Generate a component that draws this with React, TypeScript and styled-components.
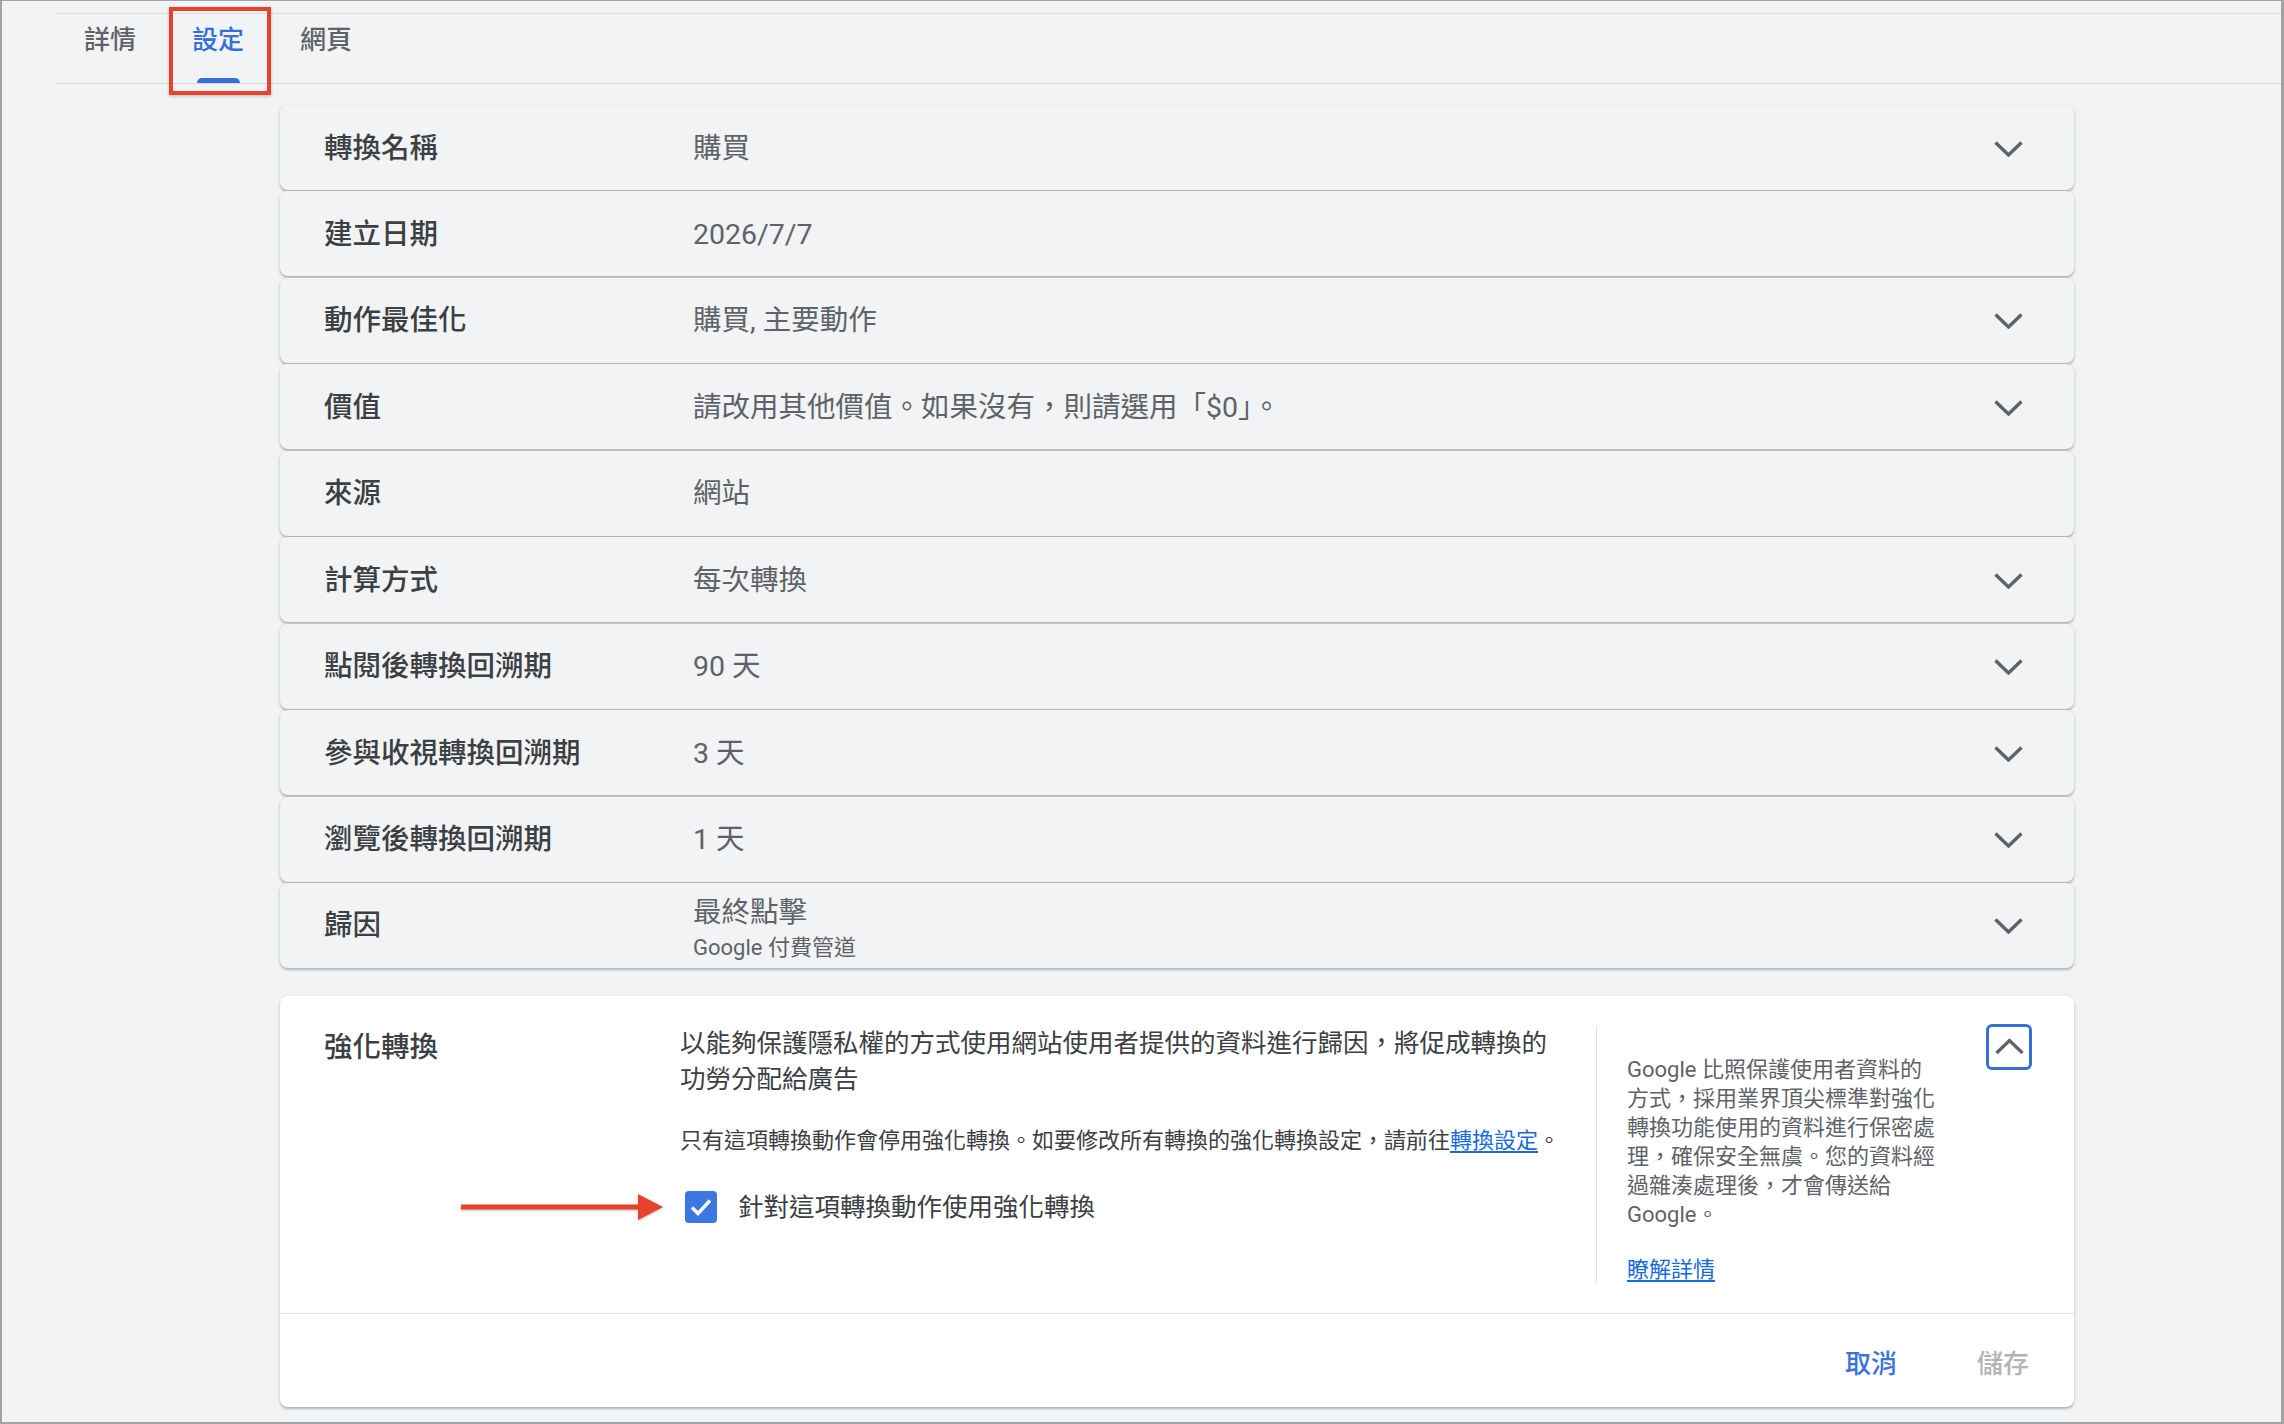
import React from "react";
import styled, { createGlobalStyle } from "styled-components";

const GlobalStyle = createGlobalStyle`
  html, body {
    margin: 0;
    padding: 0;
    background: #f1f3f4;
  }
  body {
    font-family: "Roboto", "Noto Sans CJK TC", "Noto Sans", sans-serif;
    -webkit-font-smoothing: antialiased;
  }
  * { box-sizing: border-box; }
`;

const Frame = styled.div`
  width: 2284px;
  height: 1424px;
  background: #f1f3f4;
  border-style: solid;
  border-color: #a2a2a4;
  border-width: 1px 3px 2px 2px;
  overflow: hidden;
`;

const TabBar = styled.div`
  margin: 12px 0 0 54px;
  height: 71px;
  border-top: 1px solid #dcdde0;
  border-bottom: 1px solid #d6d7da;
  display: flex;
`;

const Tab = styled.div<{ $active?: boolean }>`
  position: relative;
  height: 69px;
  padding: 8px 28px 0;
  display: flex;
  flex-direction: column;
  align-items: center;
  font-size: 26px;
  line-height: 36px;
  font-weight: 500;
  color: ${(p) => (p.$active ? "#3470d8" : "#5f6368")};
`;

const Indicator = styled.div`
  margin-top: auto;
  width: 43px;
  height: 5px;
  border-radius: 5px 5px 0 0;
  background: #3470d8;
`;

const Highlight = styled.div`
  position: absolute;
  left: 5px;
  top: -7px;
  width: 102px;
  height: 88px;
  border: 4px solid #e8412c;
  box-shadow: 0 1px 3px rgba(0, 0, 0, 0.25);
  pointer-events: none;
`;

const Panels = styled.div`
  margin: 21px 0 0 278px;
  width: 1794px;
  display: flex;
  flex-direction: column;
  gap: 1.44px;
`;

const RowCard = styled.div`
  height: 85px;
  display: grid;
  grid-template-columns: 369px 1fr 29px;
  align-items: center;
  padding: 2px 51px 0 44px;
  background: #f1f3f4;
  border-radius: 8px;
  box-shadow: 0 2px 2px rgba(60, 64, 67, 0.28), 0 1px 4px rgba(60, 64, 67, 0.12);
`;

const RowLabel = styled.div`
  font-size: 28.5px;
  line-height: 36px;
  font-weight: 500;
  color: #3c4043;
`;

const RowValue = styled.div<{ $twoLine?: boolean }>`
  font-size: 28.5px;
  line-height: 36px;
  color: #5f6368;
  display: flex;
  flex-direction: column;
  padding-top: ${(p) => (p.$twoLine ? "6px" : "0")};
`;

const SubValue = styled.span`
  font-size: 22px;
  line-height: 32px;
  margin-top: 1px;
  color: #5f6368;
`;

const Chevron = styled.svg`
  display: block;
  width: 29px;
  height: 16px;
`;

const EnhancedCard = styled.div`
  margin: 28px 0 0 278px;
  width: 1794px;
  height: 411px;
  background: #ffffff;
  border-radius: 8px;
  box-shadow: 0 2px 2px rgba(60, 64, 67, 0.28), 0 1px 4px rgba(60, 64, 67, 0.12);
  display: flex;
  flex-direction: column;
`;

const EnhancedBody = styled.div`
  height: 318px;
  display: flex;
  align-items: flex-start;
  padding: 0 42px 0 44px;
  border-bottom: 1px solid #e0e0e0;
`;

const SectionTitle = styled.div`
  width: 356px;
  margin-top: 34px;
  font-size: 28.5px;
  line-height: 36px;
  font-weight: 500;
  color: #3c4043;
`;

const MainCol = styled.div`
  width: 916px;
  padding-top: 29px;
  display: flex;
  flex-direction: column;
`;

const Description = styled.p`
  margin: 0;
  font-size: 25.5px;
  line-height: 36px;
  color: #3c4043;
  white-space: nowrap;
`;

const Note = styled.p`
  margin: 28px 0 0;
  font-size: 22px;
  line-height: 32px;
  color: #3c4043;
  white-space: nowrap;
`;

const Link = styled.a`
  color: #1a6ae0;
  text-decoration: underline;
  text-underline-offset: 3px;
  cursor: pointer;
`;

const CheckRow = styled.label`
  position: relative;
  margin: 32px 0 0 5px;
  display: flex;
  align-items: center;
  gap: 21px;
  font-size: 25.5px;
  line-height: 36px;
  color: #3c4043;
`;

const CheckBox = styled.span`
  width: 32px;
  height: 32px;
  border-radius: 4px;
  background: #3b76e1;
  display: flex;
  align-items: center;
  justify-content: center;
  flex-shrink: 0;
`;

const Arrow = styled.svg`
  position: absolute;
  right: calc(100% + 22px);
  top: 50%;
  margin-top: -13px;
  width: 202px;
  height: 26px;
  filter: drop-shadow(0 1px 1px rgba(0, 0, 0, 0.25));
`;

const InfoCol = styled.div`
  margin-top: 30px;
  width: 360px;
  height: 258px;
  border-left: 1px solid #e3e3e3;
  padding: 29px 0 0 30px;
  display: flex;
  flex-direction: column;
  align-items: flex-start;
`;

const InfoText = styled.p`
  margin: 0;
  font-size: 22px;
  line-height: 29px;
  color: #5f6368;
  white-space: nowrap;
`;

const InfoLink = styled(Link)`
  margin-top: 26px;
  font-size: 22px;
  line-height: 29px;
`;

const CollapseButton = styled.button`
  margin: 28px 0 0 auto;
  width: 46px;
  height: 46px;
  padding: 0;
  border: 3px solid #3470d8;
  border-radius: 6px;
  background: #ffffff;
  display: flex;
  align-items: center;
  justify-content: center;
`;

const Footer = styled.div`
  flex: 1;
  display: flex;
  align-items: center;
  justify-content: flex-end;
  gap: 32px;
  padding: 3px 21px 0 0;
`;

const FooterButton = styled.button<{ $disabled?: boolean }>`
  height: 56px;
  padding: 0 24px;
  border: none;
  background: transparent;
  font-family: inherit;
  font-size: 26px;
  font-weight: 500;
  color: ${(p) => (p.$disabled ? "#b4b4b4" : "#3a74e0")};
`;

const ChevronDown = () => (
  <Chevron viewBox="0 0 29 16">
    <polyline points="1.5,1.5 14.5,14 27.5,1.5" fill="none" stroke="#5f6368" strokeWidth="3.4" />
  </Chevron>
);

type Row = { label: string; value: string; sub?: string; expandable: boolean };

const rows: Row[] = [
  { label: "轉換名稱", value: "購買", expandable: true },
  { label: "建立日期", value: "2026/7/7", expandable: false },
  { label: "動作最佳化", value: "購買, 主要動作", expandable: true },
  { label: "價值", value: "請改用其他價值。如果沒有，則請選用「$0」。", expandable: true },
  { label: "來源", value: "網站", expandable: false },
  { label: "計算方式", value: "每次轉換", expandable: true },
  { label: "點閱後轉換回溯期", value: "90 天", expandable: true },
  { label: "參與收視轉換回溯期", value: "3 天", expandable: true },
  { label: "瀏覽後轉換回溯期", value: "1 天", expandable: true },
  { label: "歸因", value: "最終點擊", sub: "Google 付費管道", expandable: true },
];

export default function App() {
  return (
    <>
      <GlobalStyle />
      <Frame>
        <TabBar>
          <Tab>詳情</Tab>
          <Tab $active>
            設定
            <Indicator />
            <Highlight />
          </Tab>
          <Tab>網頁</Tab>
        </TabBar>

        <Panels>
          {rows.map((r) => (
            <RowCard key={r.label}>
              <RowLabel>{r.label}</RowLabel>
              <RowValue $twoLine={!!r.sub}>
                <span>{r.value}</span>
                {r.sub && <SubValue>{r.sub}</SubValue>}
              </RowValue>
              {r.expandable ? <ChevronDown /> : <span />}
            </RowCard>
          ))}
        </Panels>

        <EnhancedCard>
          <EnhancedBody>
            <SectionTitle>強化轉換</SectionTitle>
            <MainCol>
              <Description>
                以能夠保護隱私權的方式使用網站使用者提供的資料進行歸因，將促成轉換的
                <br />
                功勞分配給廣告
              </Description>
              <Note>
                只有這項轉換動作會停用強化轉換。如要修改所有轉換的強化轉換設定，請前往
                <Link>轉換設定</Link>。
              </Note>
              <CheckRow>
                <Arrow viewBox="0 0 202 26">
                  <rect x="0" y="10.5" width="180" height="5" fill="#e8412c" />
                  <polygon points="177,0 202,13 177,26" fill="#e8412c" />
                </Arrow>
                <CheckBox>
                  <svg width="24" height="20" viewBox="0 0 24 20">
                    <polyline
                      points="3,10.5 9,16.5 21,3.5"
                      fill="none"
                      stroke="#ffffff"
                      strokeWidth="3.4"
                    />
                  </svg>
                </CheckBox>
                針對這項轉換動作使用強化轉換
              </CheckRow>
            </MainCol>
            <InfoCol>
              <InfoText>
                Google 比照保護使用者資料的
                <br />
                方式，採用業界頂尖標準對強化
                <br />
                轉換功能使用的資料進行保密處
                <br />
                理，確保安全無虞。您的資料經
                <br />
                過雜湊處理後，才會傳送給
                <br />
                Google。
              </InfoText>
              <InfoLink>瞭解詳情</InfoLink>
            </InfoCol>
            <CollapseButton aria-label="收合">
              <svg width="29" height="17" viewBox="0 0 29 17">
                <polyline points="1.5,15 14.5,2.5 27.5,15" fill="none" stroke="#5f6368" strokeWidth="3.4" />
              </svg>
            </CollapseButton>
          </EnhancedBody>
          <Footer>
            <FooterButton>取消</FooterButton>
            <FooterButton $disabled>儲存</FooterButton>
          </Footer>
        </EnhancedCard>
      </Frame>
    </>
  );
}
